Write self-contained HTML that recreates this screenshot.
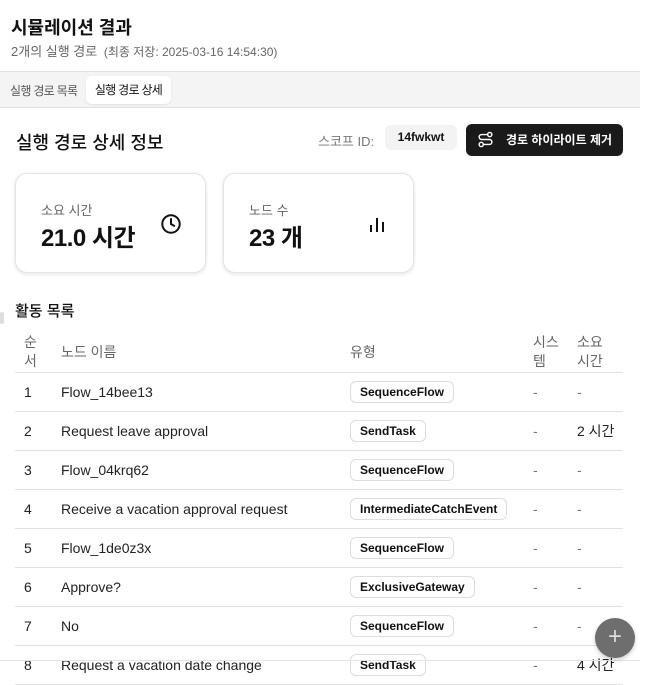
<!DOCTYPE html>
<html><head><meta charset="utf-8"><style>
*{box-sizing:border-box;margin:0;padding:0}
body{width:654px;height:672px;overflow:hidden;background:#fff;font-family:"Liberation Sans","Noto Sans CJK KR",sans-serif;color:#111;position:relative}
.a{position:absolute;white-space:nowrap}
.card{position:absolute;top:173px;width:191px;height:100px;border:1px solid #e4e4e4;border-radius:12px;box-shadow:0 1px 4px rgba(0,0,0,.12);background:#fff}
.card .l{position:absolute;left:25px;top:26px;font-size:13px;color:#666}
.card .v{position:absolute;left:25px;top:44px;font-size:24px;font-weight:700;letter-spacing:-0.5px}
table{position:absolute;left:15px;top:333px;width:608px;border-collapse:collapse;font-size:14px;table-layout:fixed}
td{height:39px;border-bottom:1px solid #e2e2e2;vertical-align:middle;color:#222;white-space:nowrap}
th{font-weight:400;color:#666;font-size:14px;text-align:left;height:39px;border-bottom:1px solid #e2e2e2;line-height:19px}
.b{display:inline-block;border:1px solid #ddd;border-radius:6px;padding:0 9px;height:22px;line-height:20px;font-size:12px;font-weight:700;color:#111}
.g{color:#777}
.p{padding-left:9px}
</style></head><body>
<div class="a" style="left:11px;top:14px;font-size:18px;font-weight:700">시뮬레이션 결과</div>
<div class="a" style="left:11px;top:41px;font-size:13px;color:#666">2개의 실행 경로 <span style="font-size:12px;margin-left:3px">(최종 저장: 2025-03-16 14:54:30)</span></div>
<div class="a" style="left:0;top:71px;width:640px;height:37px;background:#f4f4f4;border-top:1px solid #e0e0e0;border-bottom:1px solid #e0e0e0"></div>
<div class="a" style="left:10px;top:82px;font-size:12px;color:#555;letter-spacing:-0.7px">실행 경로 목록</div>
<div class="a" style="left:86px;top:76px;width:85px;height:28px;background:#fff;border-radius:6px;box-shadow:0 1px 2px rgba(0,0,0,.08);font-size:12px;line-height:28px;color:#111;text-align:center;letter-spacing:-0.7px">실행 경로 상세</div>
<div class="a" style="left:16px;top:129px;font-size:18px;font-weight:500">실행 경로 상세 정보</div>
<div class="a" style="left:318px;top:131px;font-size:13px;color:#777">스코프 ID:</div>
<div class="a" style="left:385px;top:125px;width:72px;height:25px;background:#f3f3f3;border-radius:6px;font-size:12px;font-weight:700;text-align:center;line-height:25px">14fwkwt</div>
<div class="a" style="left:466px;top:124px;width:157px;height:32px;background:#1a1a1a;border-radius:6px;color:#fff;font-size:12px;font-weight:700;line-height:32px;padding-left:40px">경로 하이라이트 제거</div>
<svg class="a" style="left:477px;top:131px" width="17" height="17" viewBox="0 0 24 24" fill="none" stroke="#fff" stroke-width="2" stroke-linecap="round"><circle cx="6" cy="19" r="3"/><circle cx="18" cy="5" r="3"/><path d="M9 19h8.5a3.5 3.5 0 0 0 0-7h-11a3.5 3.5 0 0 1 0-7H15"/></svg>
<div class="card" style="left:15px"><div class="l">소요 시간</div><div class="v">21.0 시간</div>
<svg class="a" style="left:144px;top:39px" width="22" height="22" viewBox="0 0 24 24" fill="none" stroke="#111" stroke-width="2.2" stroke-linecap="round"><circle cx="12" cy="12" r="9.5"/><path d="M12 6.5V12l3.5 2"/></svg></div>
<div class="card" style="left:223px"><div class="l">노드 수</div><div class="v">23 개</div>
<svg class="a" style="left:144px;top:38px" width="20" height="24" viewBox="0 0 20 24" stroke="#111" stroke-width="2"><path d="M3 13v7M9 6v14M15 10v10"/></svg></div>
<div class="a" style="left:15px;top:300px;font-size:15px;font-weight:500">활동 목록</div>
<div class="a" style="left:0;top:312px;width:4px;height:12px;background:#ddd;border-radius:2px"></div>
<table>
<colgroup><col style="width:46px"><col style="width:289px"><col style="width:183px"><col style="width:44px"><col></colgroup>
<tr><th class="p">순<br>서</th><th>노드 이름</th><th>유형</th><th>시스<br>템</th><th>소요<br>시간</th></tr>
<tr><td class="p">1</td><td>Flow_14bee13</td><td><span class="b">SequenceFlow</span></td><td class="g">-</td><td class="g">-</td></tr>
<tr><td class="p">2</td><td>Request leave approval</td><td><span class="b">SendTask</span></td><td class="g">-</td><td>2 시간</td></tr>
<tr><td class="p">3</td><td>Flow_04krq62</td><td><span class="b">SequenceFlow</span></td><td class="g">-</td><td class="g">-</td></tr>
<tr><td class="p">4</td><td>Receive a vacation approval request</td><td><span class="b">IntermediateCatchEvent</span></td><td class="g">-</td><td class="g">-</td></tr>
<tr><td class="p">5</td><td>Flow_1de0z3x</td><td><span class="b">SequenceFlow</span></td><td class="g">-</td><td class="g">-</td></tr>
<tr><td class="p">6</td><td>Approve?</td><td><span class="b">ExclusiveGateway</span></td><td class="g">-</td><td class="g">-</td></tr>
<tr><td class="p">7</td><td>No</td><td><span class="b">SequenceFlow</span></td><td class="g">-</td><td class="g">-</td></tr>
<tr><td class="p">8</td><td>Request a vacation date change</td><td><span class="b">SendTask</span></td><td class="g">-</td><td>4 시간</td></tr>
</table>
<div class="a" style="left:0;top:660px;width:640px;height:1px;background:#e4e4e4"></div>
<div class="a" style="left:595px;top:618px;width:40px;height:40px;border-radius:50%;background:#6e6e6e;color:#ddd;font-size:24px;text-align:center;line-height:38px;box-shadow:0 2px 4px rgba(0,0,0,.2)">+</div>
</body></html>
